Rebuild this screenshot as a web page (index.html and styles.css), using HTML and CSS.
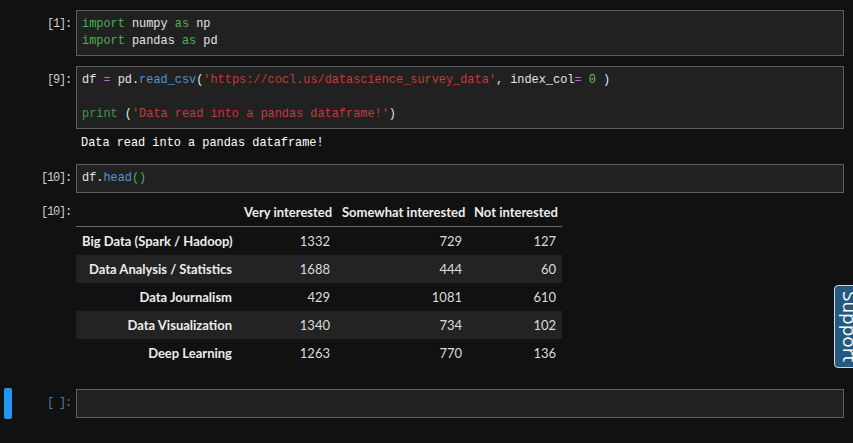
FILE: index.html
```html
<!DOCTYPE html>
<html lang="en">
<head>
<meta charset="utf-8">
<title>Notebook</title>
<link rel="stylesheet" href="styles.css">
</head>
<body>
<div class="notebook">
  <div class="cell">
    <div class="row">
      <div class="collapser"></div>
      <div class="prompt">[1]:</div>
      <div class="input"><pre class="code"><span class="kw">import</span> numpy <span class="kw">as</span> np
<span class="kw">import</span> pandas <span class="kw">as</span> pd</pre></div>
    </div>
  </div>

  <div class="cell">
    <div class="row">
      <div class="collapser"></div>
      <div class="prompt">[9]:</div>
      <div class="input"><pre class="code">df <span class="op">=</span> pd.<span class="prop">read_csv</span>(<span class="str">'https://cocl.us/datascience_survey_data'</span>, index_col<span class="op">=</span> <span class="num">0</span> )

<span class="bi">print</span> (<span class="str">'Data read into a pandas dataframe!'</span>)</pre></div>
    </div>
    <div class="row">
      <div class="collapser"></div>
      <div class="prompt"></div>
      <div class="output output-stream"><pre class="stream">Data read into a pandas dataframe!</pre></div>
    </div>
  </div>

  <div class="cell">
    <div class="row">
      <div class="collapser"></div>
      <div class="prompt">[10]:</div>
      <div class="input"><pre class="code">df.<span class="prop">head</span><span class="br">()</span></pre></div>
    </div>
    <div class="row">
      <div class="collapser"></div>
      <div class="prompt prompt-table">[10]:</div>
      <div class="output output-table">
        <table class="frame">
          <colgroup>
            <col class="c-idx"><col class="c-1"><col class="c-2"><col class="c-3">
          </colgroup>
          <thead>
            <tr><th></th><th>Very interested</th><th>Somewhat interested</th><th>Not interested</th></tr>
          </thead>
          <tbody>
            <tr><th>Big Data (Spark / Hadoop)</th><td>1332</td><td>729</td><td>127</td></tr>
            <tr><th>Data Analysis / Statistics</th><td>1688</td><td>444</td><td>60</td></tr>
            <tr><th>Data Journalism</th><td>429</td><td>1081</td><td>610</td></tr>
            <tr><th>Data Visualization</th><td>1340</td><td>734</td><td>102</td></tr>
            <tr><th>Deep Learning</th><td>1263</td><td>770</td><td>136</td></tr>
          </tbody>
        </table>
      </div>
    </div>
  </div>

  <div class="cell active">
    <div class="row">
      <div class="collapser"></div>
      <div class="prompt prompt-empty">[ ]:</div>
      <div class="input"><pre class="code"> </pre></div>
    </div>
  </div>
</div>

<div class="support">Support</div>
</body>
</html>
```

FILE: styles.css
```css
html, body {
  margin: 0;
  padding: 0;
  background: #111111;
}

body {
  width: 853px;
  height: 443px;
  overflow: hidden;
  font-family: "Lato", "Liberation Sans", sans-serif;
  color: #e0e0e0;
}

.notebook {
  display: flex;
  flex-direction: column;
  padding: 5px 9px 0 4px;
}

.cell {
  display: flex;
  flex-direction: column;
  padding: 5px 0;
}

.row {
  display: flex;
  align-items: flex-start;
}

.collapser {
  width: 8px;
  flex: 0 0 8px;
  align-self: stretch;
  border-radius: 2px;
}

.cell.active .collapser {
  background: #2196f3;
  margin: -1px 0;
}

.prompt {
  flex: 0 0 64px;
  width: 64px;
  box-sizing: border-box;
  padding: 6px 5px 0 0;
  text-align: right;
  font-family: "Liberation Mono", monospace;
  font-size: 12px;
  letter-spacing: -1.2px;
  line-height: 17px;
  color: #cdcdcd;
}

.prompt-table {
  padding-top: 11px;
}

.prompt-empty {
  color: #4a7ca3;
}

.input {
  flex: 1 1 auto;
  min-width: 0;
  background: #212121;
  border: 1px solid #5e5e5e;
}

.code, .stream {
  margin: 0;
  font-family: "Liberation Mono", monospace;
  font-size: 11.9px;
  line-height: 17px;
  white-space: pre;
}

.code {
  padding: 5px;
  color: #e4e4e4;
}

.kw { color: #4caf50; }
.bi { color: #3f9a43; }
.op { color: #b866d0; }
.prop { color: #4a98d8; }
.str { color: #c33b3b; }
.num { color: #6fbf73; }
.br { color: #4caf50; }

.output {
  flex: 1 1 auto;
  min-width: 0;
}

.output-stream {
  padding: 6px 0 2px 5px;
}

.stream {
  color: #ffffff;
}

.output-table {
  padding: 5px 0 12px 0;
}

.frame {
  border-collapse: collapse;
  table-layout: fixed;
  width: 486px;
  font-size: 13px;
  line-height: 16px;
}

.c-idx { width: 162px; }
.c-1 { width: 98px; }
.c-2 { width: 132px; }
.c-3 { width: 94px; }

.frame th, .frame td {
  padding: 6px 6px;
  text-align: right;
  white-space: nowrap;
  overflow: hidden;
}

.frame th {
  font-weight: 700;
  color: #ececec;
}

.frame td {
  color: #dcdcdc;
}

.frame thead tr {
  border-bottom: 1px solid #6a6a6a;
}

.frame tbody tr:nth-child(even) {
  background: #232323;
}

.support {
  position: fixed;
  left: 834px;
  top: 285px;
  width: 32px;
  height: 83px;
  box-sizing: border-box;
  border: 1px solid #cfd6dc;
  border-radius: 4px;
  background: #245a7f;
  color: #ffffff;
  font-family: "Open Sans", "Liberation Sans", sans-serif;
  font-size: 19px;
  line-height: 30px;
  writing-mode: vertical-rl;
  text-align: center;
}
```
